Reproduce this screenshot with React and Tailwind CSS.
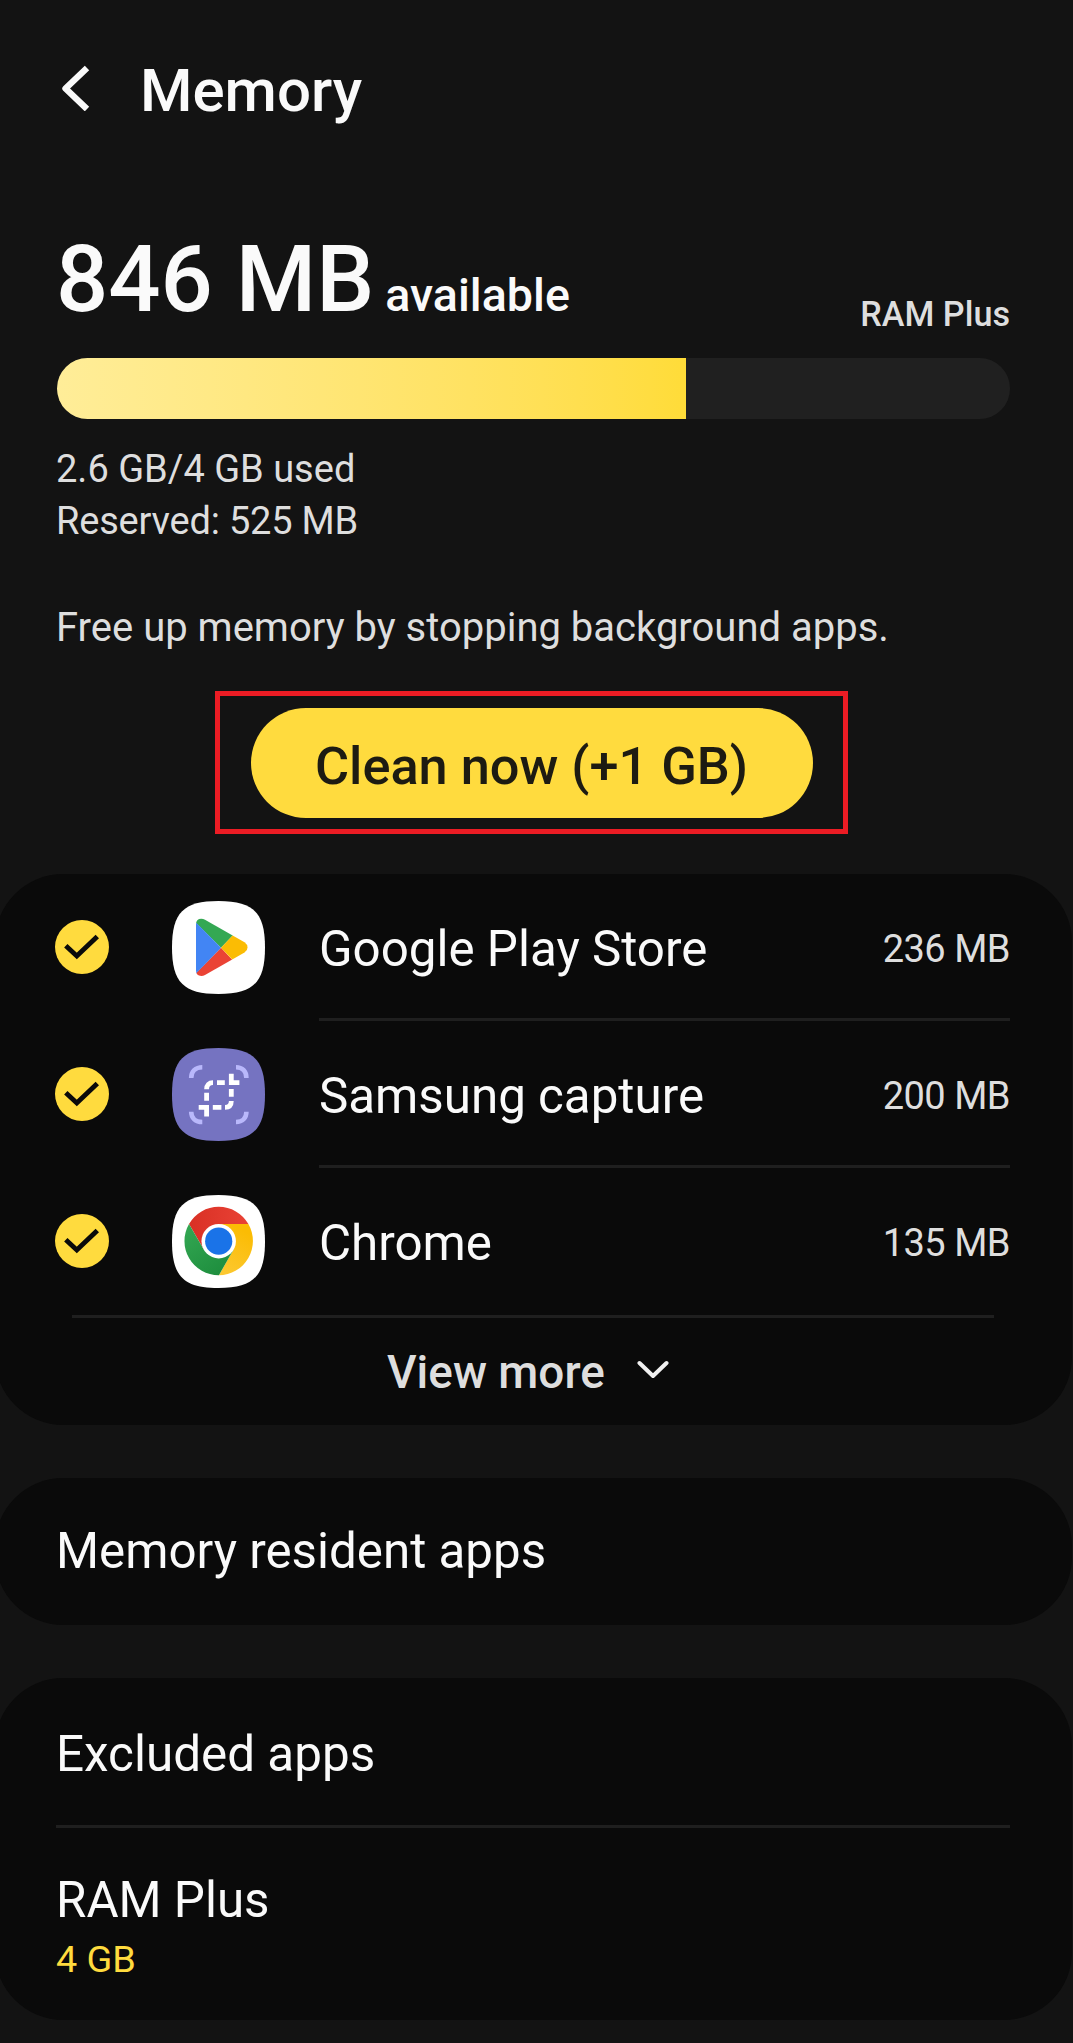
import React from "react";

const SQUIRCLE =
  "M0 46.5C0 11.6 11.6 0 46.5 0S93 11.6 93 46.5 81.4 93 46.5 93 0 81.4 0 46.5Z";

function PlayStoreIcon() {
  return (
    <svg viewBox="0 0 93 93" className="size-[93px]">
      <defs>
        <clipPath id="play-shape">
          <path d="M24 23.5Q24 17.7 29.3 17.7 31.2 17.7 33 18.7L72.5 41.2Q75.5 43.2 75.5 46.5 75.5 49.7 72.5 51.6L33 74Q31.2 75 29.3 75 24 75 24 69.3Z" />
        </clipPath>
      </defs>
      <path d={SQUIRCLE} fill="#fff" />
      <g clipPath="url(#play-shape)">
        <path d="M20 10H84L49 46.7 24 22Z" fill="#34a853" />
        <path d="M20 84H84L49 46.7 24 72Z" fill="#ea4335" />
        <path d="M23 20.5 49 46.7 23 73.5Z" fill="#4285f4" />
        <path d="M49 46.7 61.5 33.5 80 33V60L61.5 59.8Z" fill="#fbbc04" />
      </g>
    </svg>
  );
}

function CaptureIcon() {
  return (
    <svg viewBox="0 0 93 93" fill="none" className="size-[93px]">
      <path d={SQUIRCLE} fill="#7573c1" />
      <g stroke="#b9b8fb" strokeWidth="4.6">
        <path d="M19.2 30C19.2 23.5 23.5 19.2 30.3 19.2" />
        <path d="M64 19.2C70.5 19.2 74.4 23.5 74.4 30" />
        <path d="M19.2 63.8C19.2 70 23.5 74 30.3 74" />
        <path d="M74.4 63.8C74.4 70 70.5 74 64 74" />
      </g>
      <g stroke="#fff" strokeWidth="4.8">
        <path d="M34.6 41.2C34.6 37 37 34.6 41 34.6M45 34.6H52.8M34.6 44.7V52.7" />
        <path d="M59.3 25.7V34.6H67.4M59.3 41V48.8" />
        <path d="M59.3 53C59.3 57 57.3 59.3 53 59.3M40.8 59.3H49.4" />
        <path d="M26.7 59.3H34.6V68.4" />
      </g>
    </svg>
  );
}

function ChromeIcon() {
  return (
    <svg viewBox="0 0 93 93" className="size-[93px]">
      <defs>
        <linearGradient id="chrome-red" x1="0" y1="0" x2="1" y2="0">
          <stop offset="0" stopColor="#d93025" />
          <stop offset="1" stopColor="#e94235" />
        </linearGradient>
        <linearGradient id="chrome-yellow" x1="0" y1="1" x2="0.4" y2="0">
          <stop offset="0" stopColor="#fcc934" />
          <stop offset="1" stopColor="#fbbc04" />
        </linearGradient>
        <linearGradient id="chrome-green" x1="0.7" y1="1" x2="0" y2="0">
          <stop offset="0" stopColor="#1e8e3e" />
          <stop offset="1" stopColor="#34a853" />
        </linearGradient>
      </defs>
      <path d={SQUIRCLE} fill="#fff" />
      <path d="M17 29A34.2 34.2 0 0 1 76.4 29L46.7 29.2V46L31.8 54.6Z" fill="url(#chrome-red)" />
      <path d="M76.4 29A34.2 34.2 0 0 1 46.9 80.2L61.6 54.6 46.7 46V29Z" fill="url(#chrome-yellow)" />
      <path d="M46.9 80.2A34.2 34.2 0 0 1 17 29L31.8 54.6 46.7 46 61.6 54.6Z" fill="url(#chrome-green)" />
      <circle cx="46.7" cy="46.2" r="17.2" fill="#fff" />
      <circle cx="46.7" cy="46.2" r="13.6" fill="#1a73e8" />
    </svg>
  );
}

function CheckBadge() {
  return (
    <svg viewBox="0 0 54 54" fill="none" className="mb-px size-[54px]">
      <circle cx="27" cy="27" r="27" fill="#ffdb3e" />
      <path d="M10.8 25.8 21.8 36 42.3 16.4" stroke="#0a0a0a" strokeWidth="4.9" />
    </svg>
  );
}

const apps = [
  { name: "Google Play Store", size: "236 MB", Icon: PlayStoreIcon },
  { name: "Samsung capture", size: "200 MB", Icon: CaptureIcon },
  { name: "Chrome", size: "135 MB", Icon: ChromeIcon },
];

function AppRow({ name, size, Icon, divider }) {
  return (
    <li className="flex h-[147px] items-center pl-[60px]">
      <CheckBadge />
      <div className="ml-[63px] mr-[54px]">
        <Icon />
      </div>
      <div
        className={
          "mr-[62px] flex h-full flex-1 items-center justify-between border-b-[3px] pt-[6px] " +
          (divider ? "border-[#1f1f1f]" : "border-transparent")
        }
      >
        <span className="text-[49.3px] leading-[60px] text-[#fafafa]">{name}</span>
        <span className="pb-px text-[38px] leading-[60px] tracking-[-0.5px] text-[#dedede]">{size}</span>
      </div>
    </li>
  );
}

export default function App() {
  return (
    <div className="h-[2043px] w-[1073px] overflow-hidden bg-[#131313] font-[Roboto,sans-serif] text-[#fafafa]">
      <header className="flex h-[181px] items-center pl-[59px]">
        <svg viewBox="0 0 32 48" fill="none" className="mb-[8px] h-12 w-8">
          <path d="M28 5 6.5 25.5 28 46" stroke="#fafafa" strokeWidth="6.4" strokeLinejoin="round" />
        </svg>
        <h1 className="ml-[49px] text-[60px] font-medium leading-[60px]">Memory</h1>
      </header>

      <section className="pl-14 pr-[63px] pt-[52px]">
        <div className="flex h-[99px] items-end justify-between">
          <div className="flex items-baseline gap-[11px] pb-[6px]">
            <span className="text-[92px] font-medium leading-[92px]">846 MB</span>
            <span className="text-[46.6px] font-medium leading-[46px]">available</span>
          </div>
          <span className="mb-px text-[34.2px] font-medium leading-[34px] text-[#dedede]">RAM Plus</span>
        </div>
        <div className="ml-px mt-[26px] h-[61px] overflow-hidden rounded-full bg-[#202020]">
          <div className="h-full w-[629px] bg-linear-to-r from-[#ffed98] to-[#ffdc38]" />
        </div>
        <div className="mt-6 text-[38px] leading-[52px] text-[#dedede]">
          <p>2.6 GB/4 GB used</p>
          <p className="tracking-[-0.2px]">Reserved: 525 MB</p>
        </div>
        <p className="mt-[55px] text-[40px] leading-[52px] text-[#dedede]">
          Free up memory by stopping background apps.
        </p>
      </section>

      <div className="ml-[215px] mt-[37px] flex h-[143px] w-[633px] items-center justify-center border-[5px] border-[#ec1c24]">
        <button className="flex h-[110px] w-[562px] items-center justify-center rounded-full bg-[#ffdb3e] pt-[6px] text-[52.3px] font-medium leading-[60px] text-[#1d1b12]">
          Clean now (+1 GB)
        </button>
      </div>

      <section className="-ml-[5px] mt-10 h-[551px] w-[1077px] rounded-[68px] bg-[#0a0a0a]">
        <ul>
          {apps.map((app, i) => (
            <AppRow key={app.name} {...app} divider={i < apps.length - 1} />
          ))}
        </ul>
        <div className="ml-[77px] mr-[78px] h-[3px] bg-[#1f1f1f]" />
        <div className="flex h-[107px] items-center pl-[392px] pt-px">
          <span className="text-[45.9px] font-medium leading-[60px] text-[#dedede]">View more</span>
          <svg viewBox="0 0 32 20" fill="none" className="ml-[32px] mb-[5px] h-5 w-8">
            <path d="M2.5 3 16 16 29.5 3" stroke="#f0f0f0" strokeWidth="4" strokeLinecap="round" strokeLinejoin="round" />
          </svg>
        </div>
      </section>

      <section className="-ml-[5px] mt-[53px] flex h-[147px] w-[1077px] items-center rounded-[68px] bg-[#0a0a0a] pb-[2px] pl-[61px]">
        <span className="text-[49.3px] leading-[60px]">Memory resident apps</span>
      </section>

      <section className="-ml-[5px] mt-[53px] h-[342px] w-[1077px] rounded-[68px] bg-[#0a0a0a] pl-[61px] pr-[62px]">
        <div className="flex h-[150px] items-center border-b-[3px] border-[#1f1f1f] pt-[4px]">
          <span className="text-[49.4px] leading-[60px]">Excluded apps</span>
        </div>
        <div className="flex flex-col pt-[42px]">
          <span className="text-[49.3px] leading-[60px]">RAM Plus</span>
          <span className="text-[37.8px] leading-[58px] text-[#ffdb3e]">4 GB</span>
        </div>
      </section>
    </div>
  );
}
